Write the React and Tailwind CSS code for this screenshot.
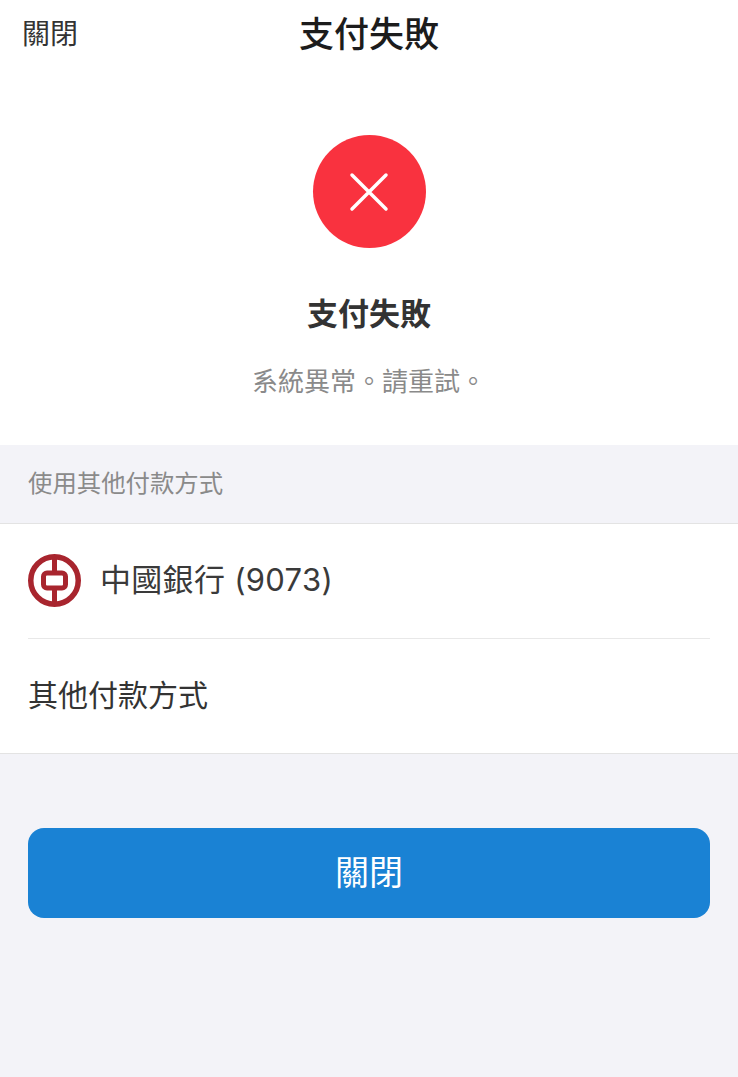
const font = 'font-["Inter","Noto_Sans_CJK_TC",sans-serif]';

function BankLogo() {
  return (
    <svg width="53" height="53" viewBox="0 0 53 53" className="shrink-0">
      <circle cx="26.5" cy="26.5" r="23.75" fill="none" stroke="#a8252e" strokeWidth="5.5" />
      <rect x="15.5" y="19" width="22" height="15" rx="3.5" fill="none" stroke="#a8252e" strokeWidth="5" />
      <rect x="24" y="3" width="5" height="14" fill="#a8252e" />
      <rect x="24" y="36" width="5" height="14" fill="#a8252e" />
    </svg>
  );
}

export default function App() {
  return (
    <div className={`w-[738px] h-[1077px] flex flex-col bg-[#f3f3f8] overflow-hidden ${font}`}>
      <div className="bg-white">
        <div className="h-[68px] grid grid-cols-3 items-center px-[22px]">
          <span className="text-[28px] text-[#333]">關閉</span>
          <span className="text-center text-[35px] font-medium text-[#1c1c1c] whitespace-nowrap">支付失敗</span>
        </div>
        <div className="flex flex-col items-center pt-[67px] pb-[44px]">
          <div className="w-[113px] h-[113px] rounded-full bg-[#f9323f] flex items-center justify-center">
            <svg width="40" height="40" viewBox="0 0 40 40" stroke="white" strokeWidth="3.5" strokeLinecap="round">
              <path d="M3 3 L37 37 M37 3 L3 37" />
            </svg>
          </div>
          <div className="mt-[43px] text-[31px] font-bold text-[#333]">支付失敗</div>
          <div className="mt-[24px] text-[26px] text-[#8a8a8a]">系統異常。請重試。</div>
        </div>
      </div>
      <div className="h-[79px] flex items-center px-[28px] text-[24.4px] text-[#8a8a8a] border-b border-[#e3e3e3]">使用其他付款方式</div>
      <div className="bg-white border-b border-[#e3e3e3] px-[28px]">
        <div className="h-[115px] flex items-center gap-[19px] border-b border-[#e8e8e8]">
          <BankLogo />
          <span className="text-[31px] tracking-[0.3px] text-[#3a3a3a]">中國銀行 (9073)</span>
        </div>
        <div className="h-[114px] flex items-center text-[30px] text-[#333]">其他付款方式</div>
      </div>
      <div className="px-[28px] pt-[74px]">
        <div className="h-[90px] rounded-[16px] bg-[#1a82d4] flex items-center justify-center text-[34px] text-white">關閉</div>
      </div>
    </div>
  );
}
